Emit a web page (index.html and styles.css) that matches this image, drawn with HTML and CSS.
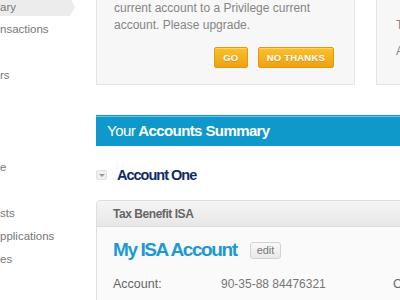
FILE: index.html
```html
<!DOCTYPE html>
<html lang="en">
<head>
    <meta charset="UTF-8">
    <meta name="viewport" content="width=device-width, initial-scale=1.0">
    <title>Accounts Summary</title>
    <link rel="stylesheet" href="styles.css">
</head>
<body>

    <div class="page">

        <!-- Side navigation -->
        <div class="sidebar">
            <ul class="nav">
                <li class="active"><span>ary</span></li>
                <li>nsactions</li>
                <li>&nbsp;</li>
                <li>rs</li>
                <li>&nbsp;</li>
                <li>&nbsp;</li>
                <li>&nbsp;</li>
                <li>e</li>
                <li>&nbsp;</li>
                <li>sts</li>
                <li>pplications</li>
                <li>es</li>
            </ul>
        </div>

        <div class="main">

            <!-- Offers -->
            <div class="top-row">
                <div class="offer">
                    <p>We think you should switch your<br>
                    current account to a Privilege current<br>
                    account. Please upgrade.</p>
                    <div class="actions">
                        <button type="button" class="btn-go">GO</button>
                        <button type="button">NO THANKS</button>
                    </div>
                </div>
                <div class="offer offer-side">
                    <p>Top up your savings</p>
                    <p>A new ISA allowance</p>
                </div>
            </div>

            <!-- Summary -->
            <h2 class="summary-bar"><span class="light">Your</span> Accounts Summary</h2>

            <div class="group-title">
                <span class="toggle"><i></i></span>
                <h3>Account One</h3>
            </div>

            <div class="card">
                <div class="card-head">Tax Benefit ISA</div>
                <div class="card-body">
                    <div class="card-title">
                        <h4>My ISA Account</h4>
                        <button type="button" class="edit">edit</button>
                    </div>
                    <div class="details">
                        <span class="label">Account:</span>
                        <span class="value">90-35-88 84476321</span>
                        <span class="label">Current balance:</span>
                    </div>
                </div>
            </div>

        </div>
    </div>

</body>
</html>
```

FILE: styles.css
```css
body {
    font-family: "Liberation Sans", Arial, sans-serif;
    background: #fff;
    margin: 0;
    padding: 0;
    overflow: hidden;
}
.page {
    display: flex;
    gap: 20px;
    width: 560px;
}
.sidebar {
    width: 76px;
    flex-shrink: 0;
    overflow: hidden;
}
.nav {
    list-style: none;
    margin: -5px 0 0;
    padding: 0;
}
.nav li {
    height: 23px;
    line-height: 23px;
    font-size: 11.5px;
    color: #777;
    white-space: nowrap;
}
.nav li.active {
    height: 18px;
    padding: 3px 0 2px;
    line-height: 18px;
}
.nav li.active span {
    display: block;
    width: 75px;
    height: 18px;
    background: #ececec;
    clip-path: polygon(0 0, 70px 0, 100% 50%, 70px 100%, 0 100%);
}
.main {
    width: 440px;
    flex-shrink: 0;
}
.top-row {
    display: flex;
    gap: 21px;
    margin-top: -30px;
}
.offer {
    width: 259px;
    box-sizing: border-box;
    background: #f7f7f7;
    border: 1px solid #e4e4e4;
    padding: 12px 20px 16px 17px;
}
.offer p {
    margin: 0;
    font-size: 12px;
    line-height: 17px;
    color: #858585;
    white-space: nowrap;
}
.actions {
    display: flex;
    justify-content: flex-end;
    gap: 10px;
    margin-top: 13px;
}
.actions button {
    height: 21px;
    min-width: 34px;
    padding: 0 8px;
    border: 1px solid #e29a12;
    border-radius: 2px;
    background: linear-gradient(#fbc02a, #eea214);
    box-shadow: inset 0 1px 0 rgba(255, 255, 255, 0.35);
    color: white;
    font-family: "Liberation Sans", Arial, sans-serif;
    font-size: 9.5px;
    font-weight: bold;
    letter-spacing: 0.2px;
    text-shadow: 0 1px 0 rgba(160, 90, 0, 0.35);
    cursor: pointer;
}
.offer-side {
    flex: 1;
    padding: 46px 10px 10px 19px;
}
.offer-side p + p {
    margin-top: 9px;
}
.summary-bar {
    margin: 30px 0 0;
    height: 30px;
    line-height: 30px;
    padding-left: 11px;
    background: #0f99cb;
    border-top: 1px solid #1497c8;
    box-shadow: inset 0 1px 0 #6cc3e3;
    color: white;
    font-size: 15px;
    font-weight: bold;
    letter-spacing: -0.6px;
}
.summary-bar .light {
    font-weight: normal;
    letter-spacing: -0.5px;
}
.group-title {
    display: flex;
    align-items: center;
    gap: 10px;
    margin-top: 21px;
}
.toggle {
    width: 11px;
    height: 10px;
    box-sizing: border-box;
    border: 1px solid #e2e2e2;
    border-radius: 2px;
    background: #f0f0f0;
    display: flex;
    align-items: center;
    justify-content: center;
}
.toggle i {
    width: 0;
    height: 0;
    border-left: 3px solid transparent;
    border-right: 3px solid transparent;
    border-top: 3px solid #999;
}
.group-title h3 {
    margin: 0;
    font-size: 14.5px;
    line-height: 16px;
    color: #0d2b69;
    letter-spacing: -1px;
}
.card {
    margin-top: 17px;
    border: 1px solid #dedede;
    border-radius: 4px 0 0 0;
    background: #fafafa;
}
.card-head {
    padding: 2px 16px 0;
    line-height: 23px;
    border-bottom: 1px solid #dcdcdc;
    background: linear-gradient(#f5f5f5, #e7e7e7);
    border-radius: 4px 0 0 0;
    color: #666;
    font-size: 12px;
    font-weight: bold;
    letter-spacing: -0.45px;
}
.card-body {
    padding: 12px 16px 20px;
}
.card-title {
    display: flex;
    align-items: center;
}
.card-title h4 {
    margin: 0;
    font-size: 19px;
    line-height: 22px;
    color: #1a99d5;
    letter-spacing: -1.4px;
}
.edit {
    margin-left: 13px;
    height: 17px;
    padding: 0 6px;
    border: 1px solid #d2d2d2;
    border-radius: 3px;
    background: linear-gradient(#f9f9f9, #e9e9e9);
    color: #777;
    font-family: "Liberation Sans", Arial, sans-serif;
    font-size: 11px;
    line-height: 15px;
    cursor: pointer;
}
.details {
    display: grid;
    grid-template-columns: 108px 172px auto;
    margin-top: 14px;
    line-height: 18px;
    white-space: nowrap;
}
.label {
    font-size: 12.5px;
    color: #666;
}
.value {
    font-size: 12px;
    color: #777;
}
```
